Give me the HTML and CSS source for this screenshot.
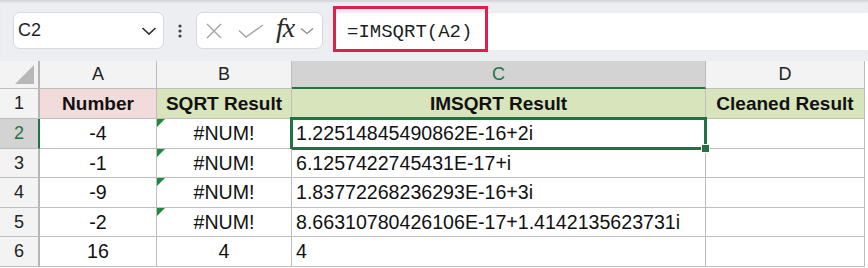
FILE: index.html
```html
<!DOCTYPE html>
<html lang="en">
<head>
  <meta charset="UTF-8" />
  <title>IMSQRT</title>
  <link rel="stylesheet" href="styles.css">
</head>
<body>
  <div class="toolbar">
    <div class="namebox">
      <span class="cellref">C2</span>
      <svg class="chev" width="16" height="10" viewBox="0 0 16 10"><path d="M1.5 2 L8 8 L14.5 2" fill="none" stroke="#333" stroke-width="1.7"/></svg>
    </div>
    <div class="dots">
      <svg width="6" height="14" viewBox="0 0 6 14"><circle cx="3" cy="2" r="1.6" fill="#444"/><circle cx="3" cy="7" r="1.6" fill="#444"/><circle cx="3" cy="12" r="1.6" fill="#444"/></svg>
    </div>
    <div class="fxbox">
      <svg class="ico-x" width="18" height="16" viewBox="0 0 18 16"><path d="M2 1 L16 15 M16 1 L2 15" stroke="#a3a3a3" stroke-width="1.4" fill="none"/></svg>
      <svg class="ico-check" width="26" height="14" viewBox="0 0 26 14"><path d="M1 6.5 L8 13 L25 1" stroke="#a3a3a3" stroke-width="1.4" fill="none"/></svg>
      <span class="fx">fx</span>
      <svg class="chev-sm" width="14" height="8" viewBox="0 0 14 8"><path d="M1 1.5 L7 6.5 L13 1.5" fill="none" stroke="#8a8a8a" stroke-width="1.3"/></svg>
    </div>
    <div class="formula">
      <div class="highlight"></div>
      <span class="formula-text">=IMSQRT(A2)</span>
    </div>
  </div>

  <div class="sheet">
    <div class="corner"><span class="tri"></span></div>
    <div class="colhead">A</div>
    <div class="colhead">B</div>
    <div class="colhead active">C</div>
    <div class="colhead">D</div>

    <div class="rowhead">1</div>
    <div class="cell hdr pink">Number</div>
    <div class="cell hdr green">SQRT Result</div>
    <div class="cell hdr green">IMSQRT Result</div>
    <div class="cell hdr green">Cleaned Result</div>

    <div class="rowhead active">2</div>
    <div class="cell center">-4</div>
    <div class="cell center err">#NUM!</div>
    <div class="cell left selected">1.22514845490862E-16+2i</div>
    <div class="cell"></div>

    <div class="rowhead">3</div>
    <div class="cell center">-1</div>
    <div class="cell center err">#NUM!</div>
    <div class="cell left">6.1257422745431E-17+i</div>
    <div class="cell"></div>

    <div class="rowhead">4</div>
    <div class="cell center">-9</div>
    <div class="cell center err">#NUM!</div>
    <div class="cell left">1.83772268236293E-16+3i</div>
    <div class="cell"></div>

    <div class="rowhead">5</div>
    <div class="cell center">-2</div>
    <div class="cell center err">#NUM!</div>
    <div class="cell left">8.66310780426106E-17+1.4142135623731i</div>
    <div class="cell"></div>

    <div class="rowhead">6</div>
    <div class="cell center">16</div>
    <div class="cell center">4</div>
    <div class="cell left">4</div>
    <div class="cell"></div>
  </div>
</body>
</html>
```

FILE: styles.css
```css
body {
  margin: 0;
  background: #ffffff;
  font-family: 'Liberation Sans', Arial, sans-serif;
  color: #1f1f1f;
}

/* formula bar area */
.toolbar {
  height: 61px;
  background: #eceef1;
  box-shadow: inset 0 3px 2px -1px #d3d6d9;
  display: flex;
  align-items: flex-start;
  padding-top: 12px;
  box-sizing: border-box;
}
.namebox {
  margin-left: 13px;
  width: 151px;
  height: 37px;
  box-sizing: border-box;
  background: #ffffff;
  border: 1px solid #d6d9dd;
  border-radius: 7px;
  display: flex;
  align-items: center;
  justify-content: space-between;
  padding: 0 6px 0 4px;
}
.cellref {
  font-size: 18px;
}
.dots {
  width: 32px;
  height: 37px;
  display: flex;
  align-items: center;
  justify-content: center;
}
.fxbox {
  width: 127px;
  height: 37px;
  box-sizing: border-box;
  background: #ffffff;
  border: 1px solid #d6d9dd;
  border-radius: 7px;
  display: flex;
  align-items: center;
  padding-left: 8px;
}
.ico-x {
  margin-right: 15px;
}
.ico-check {
  margin-right: 12px;
}
.fx {
  font-family: 'Liberation Serif', 'DejaVu Serif', serif;
  font-style: italic;
  font-size: 28px;
  color: #2a2a2a;
  margin-right: 6px;
  margin-top: -5px;
  letter-spacing: -1px;
}
.formula {
  position: relative;
  flex: 1;
  margin-left: 10px;
  margin-top: 1px;
  height: 37px;
  background: #ffffff;
  display: flex;
  align-items: center;
}
.formula-text {
  font-family: 'Liberation Mono', 'DejaVu Sans Mono', monospace;
  font-size: 19px;
  padding-left: 14px;
  color: #1f1f1f;
}
.highlight {
  position: absolute;
  left: 0;
  top: -7px;
  width: 155px;
  height: 46px;
  box-sizing: border-box;
  border: 3px solid #e0204a;
}

/* grid */
.sheet {
  display: grid;
  grid-template-columns: 40px 117px 135px 414px 159px;
  grid-template-rows: 28px 30px 30px 29px 30px 29px 30px;
  font-size: 19.6px;
}
.sheet > div {
  box-sizing: border-box;
  border-right: 1px solid #bdbdbd;
  border-bottom: 1px solid #bdbdbd;
  display: flex;
  align-items: center;
}
.corner {
  position: relative;
  background: #f3f3f3;
  border-right: 2px solid #b5b5b5 !important;
}
.tri {
  position: absolute;
  right: 4px;
  bottom: 4px;
  width: 0;
  height: 0;
  border-left: 19px solid transparent;
  border-bottom: 19px solid #b8b8b8;
}
.colhead {
  background: #f3f3f3;
  justify-content: center;
  font-size: 18px;
  color: #222;
}
.colhead.active {
  background: #d3d3d3;
  color: #217346;
  border-bottom: 2px solid #217346 !important;
}
.rowhead {
  background: #f3f3f3;
  justify-content: center;
  font-size: 18px;
  color: #222;
  border-right: 2px solid #b5b5b5 !important;
}
.rowhead.active {
  background: #d3d3d3;
  color: #217346;
  border-right: 2px solid #217346 !important;
}
.cell {
  background: #ffffff;
  color: #111;
}
.center {
  justify-content: center;
}
.left {
  padding-left: 4px;
}
.hdr {
  font-weight: bold;
  font-size: 19px;
  justify-content: center;
}
.pink {
  background: #f2dcdb;
}
.green {
  background: #d8e4bc;
}
.err {
  position: relative;
}
.err::before {
  content: "";
  position: absolute;
  left: 0;
  top: 0;
  border-top: 8px solid #1e8a3c;
  border-right: 8px solid transparent;
}
.selected {
  position: relative;
}
.selected::after {
  content: "";
  position: absolute;
  left: -2px;
  top: -2px;
  right: -2px;
  bottom: -2px;
  border: 3px solid #217346;
}
.selected::before {
  content: "";
  position: absolute;
  right: -5px;
  bottom: -5px;
  width: 7px;
  height: 7px;
  background: #217346;
  border: 1px solid #ffffff;
  z-index: 2;
}
```
